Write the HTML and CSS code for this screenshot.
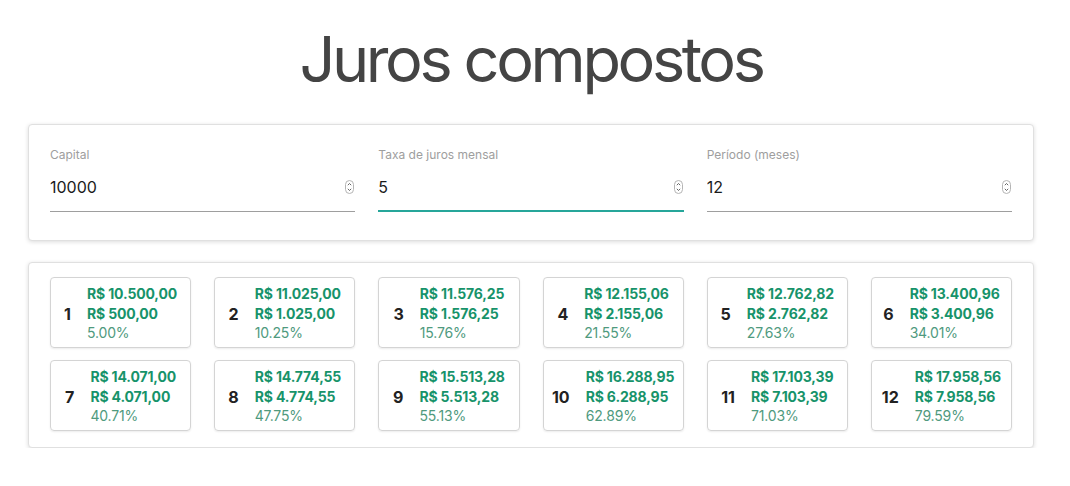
FILE: index.html
```html
<!DOCTYPE html>
<html lang="pt">
<head>
<meta charset="utf-8">
<title>Juros compostos</title>
<link rel="stylesheet" href="styles.css">
</head>
<body>
<main class="page">
  <h1 class="title">Juros compostos</h1>

  <section class="card inputs">
    <div class="field">
      <label class="label">Capital</label>
      <div class="control">
        <input class="input" type="text" value="10000">
        <svg class="spin" width="9" height="14" viewBox="0 0 9 14"><rect x="0.5" y="0.5" width="8" height="13" rx="4" fill="#fff" stroke="#b5b5b5"/><path d="M2.8 5.2 4.5 3.5 6.2 5.2M2.8 8.8 4.5 10.5 6.2 8.8" fill="none" stroke="#555" stroke-width="0.9"/></svg>
      </div>
    </div>
    <div class="field">
      <label class="label">Taxa de juros mensal</label>
      <div class="control focused">
        <input class="input" type="text" value="5">
        <svg class="spin" width="9" height="14" viewBox="0 0 9 14"><rect x="0.5" y="0.5" width="8" height="13" rx="4" fill="#fff" stroke="#b5b5b5"/><path d="M2.8 5.2 4.5 3.5 6.2 5.2M2.8 8.8 4.5 10.5 6.2 8.8" fill="none" stroke="#555" stroke-width="0.9"/></svg>
      </div>
    </div>
    <div class="field">
      <label class="label">Período (meses)</label>
      <div class="control">
        <input class="input" type="text" value="12">
        <svg class="spin" width="9" height="14" viewBox="0 0 9 14"><rect x="0.5" y="0.5" width="8" height="13" rx="4" fill="#fff" stroke="#b5b5b5"/><path d="M2.8 5.2 4.5 3.5 6.2 5.2M2.8 8.8 4.5 10.5 6.2 8.8" fill="none" stroke="#555" stroke-width="0.9"/></svg>
      </div>
    </div>
  </section>

  <section class="card results">
    <div class="item"><span class="num">1</span><div class="vals"><span class="total">R$ 10.500,00</span><span class="gain">R$ 500,00</span><span class="pct">5.00%</span></div></div>
    <div class="item"><span class="num">2</span><div class="vals"><span class="total">R$ 11.025,00</span><span class="gain">R$ 1.025,00</span><span class="pct">10.25%</span></div></div>
    <div class="item"><span class="num">3</span><div class="vals"><span class="total">R$ 11.576,25</span><span class="gain">R$ 1.576,25</span><span class="pct">15.76%</span></div></div>
    <div class="item"><span class="num">4</span><div class="vals"><span class="total">R$ 12.155,06</span><span class="gain">R$ 2.155,06</span><span class="pct">21.55%</span></div></div>
    <div class="item"><span class="num">5</span><div class="vals"><span class="total">R$ 12.762,82</span><span class="gain">R$ 2.762,82</span><span class="pct">27.63%</span></div></div>
    <div class="item"><span class="num">6</span><div class="vals"><span class="total">R$ 13.400,96</span><span class="gain">R$ 3.400,96</span><span class="pct">34.01%</span></div></div>
    <div class="item"><span class="num">7</span><div class="vals"><span class="total">R$ 14.071,00</span><span class="gain">R$ 4.071,00</span><span class="pct">40.71%</span></div></div>
    <div class="item"><span class="num">8</span><div class="vals"><span class="total">R$ 14.774,55</span><span class="gain">R$ 4.774,55</span><span class="pct">47.75%</span></div></div>
    <div class="item"><span class="num">9</span><div class="vals"><span class="total">R$ 15.513,28</span><span class="gain">R$ 5.513,28</span><span class="pct">55.13%</span></div></div>
    <div class="item"><span class="num">10</span><div class="vals"><span class="total">R$ 16.288,95</span><span class="gain">R$ 6.288,95</span><span class="pct">62.89%</span></div></div>
    <div class="item"><span class="num">11</span><div class="vals"><span class="total">R$ 17.103,39</span><span class="gain">R$ 7.103,39</span><span class="pct">71.03%</span></div></div>
    <div class="item"><span class="num">12</span><div class="vals"><span class="total">R$ 17.958,56</span><span class="gain">R$ 7.958,56</span><span class="pct">79.59%</span></div></div>
  </section>
</main>
</body>
</html>
```

FILE: styles.css
```css
* { box-sizing: border-box; }

html, body {
  margin: 0;
  background: #fff;
}

body {
  font-family: Inter, "Noto Sans", sans-serif;
  color: #222;
}

.page {
  width: 1006px;
  margin-left: 28px;
  padding-top: 21px;
}

.title {
  margin: 0 0 27px;
  text-align: center;
  font-size: 63px;
  line-height: 76px;
  font-weight: 400;
  letter-spacing: -3.4px;
  color: #444;
}

.card {
  background: #fff;
  border-radius: 4px;
  border: 1px solid #e0e0e0;
  box-shadow: 0 1px 4px rgba(0, 0, 0, 0.14);
}

.inputs {
  display: grid;
  grid-template-columns: repeat(3, 1fr);
  column-gap: 23px;
  padding: 22px 21px 28px;
}

.field {
  display: flex;
  flex-direction: column;
}

.label {
  font-size: 12px;
  line-height: 16px;
  color: #9e9e9e;
}

.control {
  position: relative;
  display: flex;
  align-items: center;
  height: 49px;
  border-bottom: 1px solid #9e9e9e;
}

.control.focused {
  border-bottom: 2px solid #26a69a;
}

.input {
  flex: 1;
  min-width: 0;
  border: 0;
  outline: 0;
  padding: 0;
  margin: 0;
  background: transparent;
  font-family: inherit;
  font-size: 16px;
  color: #1a1a1a;
}

.spin {
  flex: none;
  margin-right: 1px;
}

.results {
  margin-top: 21px;
  display: grid;
  grid-template-columns: repeat(6, 1fr);
  column-gap: 23px;
  row-gap: 12px;
  padding: 14px 21px 16px;
}

.item {
  height: 71px;
  display: flex;
  align-items: center;
  justify-content: center;
  gap: 16px;
  padding-top: 2px;
  border: 1px solid #d4d4d4;
  border-radius: 4px;
  box-shadow: 0 1px 2px rgba(0, 0, 0, 0.08);
}

.num {
  font-size: 16px;
  font-weight: 700;
  color: #222;
}

.vals {
  display: flex;
  flex-direction: column;
  font-size: 14px;
  line-height: 19.5px;
  letter-spacing: -0.15px;
}

.total, .gain {
  font-weight: 700;
  color: #17936a;
}

.pct {
  color: #4f9a7e;
}
```
